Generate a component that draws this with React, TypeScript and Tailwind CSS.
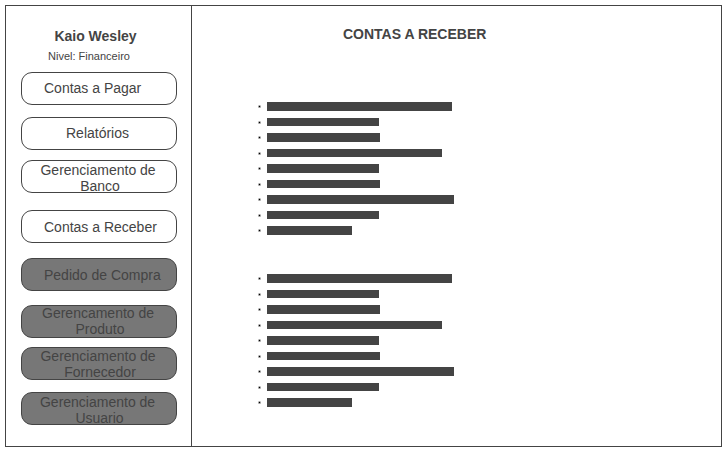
type NavItem = { lines: string[]; space: string; text: string; disabled?: boolean };

const items: NavItem[] = [
  { lines: ["Contas a Pagar"], space: "mt-0", text: "pl-[22px] pb-px text-left" },
  { lines: ["Relatórios"], space: "mt-3", text: "pr-[3px] pb-px text-center" },
  { lines: ["Gerenciamento de ", "Banco"], space: "mt-[10px]", text: "pl-[2px] pt-[2px] text-center" },
  { lines: ["Contas a Receber"], space: "mt-[17px]", text: "pl-[22px] pt-px text-left" },
  { lines: ["Pedido de Compra"], space: "mt-[15px]", text: "pl-[22px] pt-px text-left", disabled: true },
  { lines: ["Gerencamento de ", "Produto"], space: "mt-[14px]", text: "pl-[2px] pb-px text-center", disabled: true },
  { lines: ["Gerenciamento de ", "Fornecedor"], space: "mt-[9px]", text: "pl-[2px] text-center", disabled: true },
  { lines: ["Gerenciamento de ", "Usuario"], space: "mt-3", text: "pl-px pt-[3px] text-center", disabled: true },
];

const bars = [
  "w-[185px] h-[9px]",
  "w-[112px] h-2",
  "w-[113px] h-[9px]",
  "w-[175px] h-2",
  "w-[112px] h-[9px]",
  "w-[113px] h-2",
  "w-[187px] h-[9px]",
  "w-[112px] h-2",
  "w-[85px] h-[9px]",
];

function NavButton({ lines, space, text, disabled }: NavItem) {
  return (
    <button
      type="button"
      disabled={disabled}
      className={`flex h-[33px] w-full items-center rounded-[11px] border border-[#444] text-[14px] leading-4 ${space} ${text} ${disabled ? "bg-[#777]" : "bg-white"}`}
    >
      <span className="w-full">
        {lines.map((line) => (
          <span key={line} className="block whitespace-pre">{line}</span>
        ))}
      </span>
    </button>
  );
}

function PlaceholderList() {
  return (
    <ul className="flex flex-col gap-[7px]">
      {bars.map((size, i) => (
        <li key={i} className="flex items-center gap-[6px]">
          <span className="flex size-[3px] items-center justify-center rounded-full bg-black/40">
            <span className="size-px bg-black" />
          </span>
          <span className={`bg-[#444] ${size}`} />
        </li>
      ))}
    </ul>
  );
}

export default function App() {
  return (
    <div className="bg-white pt-[5px] pr-[6px] pb-2 pl-[5px] font-['Liberation_Sans',Arial,sans-serif] text-[#444]">
      <div className="flex border border-[#444]">
        <aside className="w-[186px] shrink-0 border-r border-[#444] pt-[22px] pr-[14px] pb-[21px] pl-[15px]">
          <h2 className="pr-[7px] text-center text-[14px] leading-4 font-bold">Kaio Wesley</h2>
          <p className="mt-[5px] mb-[9px] pl-[27px] text-[11px] leading-[14px]">Nivel: Financeiro</p>
          <nav>
            {items.map((item) => (
              <NavButton key={item.lines.join("")} {...item} />
            ))}
          </nav>
        </aside>
        <main className="min-w-0 flex-1 pt-5 pl-[66px]">
          <h1 className="pl-[85px] text-[14px] leading-4 font-bold">CONTAS A RECEBER</h1>
          <div className="mt-[60px] flex flex-col gap-[39px]">
            <PlaceholderList />
            <PlaceholderList />
          </div>
        </main>
      </div>
    </div>
  );
}
